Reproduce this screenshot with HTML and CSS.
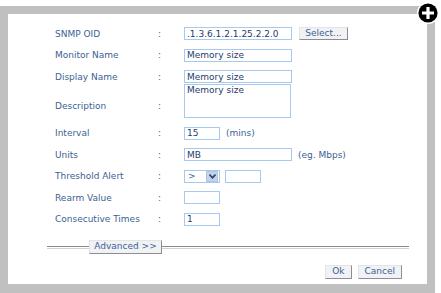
FILE: index.html
```html
<!DOCTYPE html>
<html lang="en">
<head>
  <meta charset="UTF-8" />
  <title>SNMP Monitor</title>
  <link rel="stylesheet" href="styles.css">
</head>
<body>
  <div class="frame">
    <div class="panel">
      <form class="monitor-form">
        <div class="row">
          <label class="label">SNMP OID</label>
          <span class="colon">:</span>
          <div class="field">
            <input class="text wide" type="text" value=".1.3.6.1.2.1.25.2.2.0" />
            <button type="button" class="btn select-btn">Select...</button>
          </div>
        </div>
        <div class="row">
          <label class="label">Monitor Name</label>
          <span class="colon">:</span>
          <div class="field"><input class="text wide" type="text" value="Memory size" /></div>
        </div>
        <div class="row">
          <label class="label">Display Name</label>
          <span class="colon">:</span>
          <div class="field"><input class="text wide" type="text" value="Memory size" /></div>
        </div>
        <div class="row tight">
          <label class="label desc">Description</label>
          <span class="colon desc">:</span>
          <div class="field"><textarea class="text area">Memory size</textarea></div>
        </div>
        <div class="row">
          <label class="label">Interval</label>
          <span class="colon">:</span>
          <div class="field">
            <input class="text short" type="text" value="15" />
            <span class="hint">(mins)</span>
          </div>
        </div>
        <div class="row">
          <label class="label">Units</label>
          <span class="colon">:</span>
          <div class="field">
            <input class="text wide" type="text" value="MB" />
            <span class="hint">(eg. Mbps)</span>
          </div>
        </div>
        <div class="row">
          <label class="label">Threshold Alert</label>
          <span class="colon">:</span>
          <div class="field">
            <div class="select">
              <span class="select-val">&gt;</span>
              <span class="select-arrow">
                <svg width="7" height="5" viewBox="0 0 7 5"><path d="M0.5 0.5 L3.5 3.8 L6.5 0.5" fill="none" stroke="#2b3f66" stroke-width="1.6"/></svg>
              </span>
            </div>
            <input class="text short gap" type="text" value="" />
          </div>
        </div>
        <div class="row">
          <label class="label">Rearm Value</label>
          <span class="colon">:</span>
          <div class="field"><input class="text short" type="text" value="" /></div>
        </div>
        <div class="row">
          <label class="label">Consecutive Times</label>
          <span class="colon">:</span>
          <div class="field"><input class="text short" type="text" value="1" /></div>
        </div>

        <div class="advanced">
          <button type="button" class="btn adv-btn">Advanced &gt;&gt;</button>
        </div>

        <div class="actions">
          <button type="button" class="btn">Ok</button>
          <button type="button" class="btn">Cancel</button>
        </div>
      </form>
    </div>
  </div>
  <svg class="add-icon" width="24" height="24" viewBox="0 0 24 24">
    <circle cx="12" cy="12" r="11" fill="#fff"/>
    <circle cx="12" cy="12" r="9.6" fill="#000"/>
    <path d="M12 6 V18 M6 12 H18" stroke="#fff" stroke-width="3.2"/>
  </svg>
</body>
</html>
```

FILE: styles.css
```css
body {
  margin: 0;
  background: #fff;
  font-family: 'DejaVu Sans', Verdana, sans-serif;
  font-size: 9px;
  color: #3d5f94;
}
.frame {
  position: relative;
  margin-top: 6px;
  width: 435px;
  height: 287px;
  box-sizing: border-box;
  padding: 8px 8px 9px 8px;
  background: #c0c0c0;
}
.panel {
  background: #fff;
  height: 270px;
}
.monitor-form {
  padding: 13px 0 0 47px;
}
.row {
  display: flex;
  align-items: center;
  height: 13px;
  margin-top: 8.5px;
}
.row:first-child {
  margin-top: 0;
}
.row.tight {
  margin-top: 1px;
  height: 34px;
}
.label {
  width: 103px;
  white-space: nowrap;
}
.colon {
  width: 26px;
}
.desc {
  padding-top: 9px;
}
.field {
  display: flex;
  align-items: center;
}
.text {
  box-sizing: border-box;
  height: 13px;
  border: 1px solid #a7c9ee;
  padding: 0 2px;
  font-family: inherit;
  font-size: 9px;
  color: #1f3c6b;
  background: #fff;
  outline: none;
}
.wide {
  width: 108px;
}
.short {
  width: 36px;
}
.area {
  width: 107px;
  height: 34px;
  resize: none;
  padding: 0 2px;
  line-height: 11px;
  overflow: hidden;
}
.gap {
  margin-left: 5px;
}
.hint {
  margin-left: 6px;
}
.select {
  display: flex;
  align-items: center;
  justify-content: space-between;
  box-sizing: border-box;
  width: 36px;
  height: 13px;
  border: 1px solid #a7c9ee;
  padding: 0 1px 0 3px;
  color: #3d5f94;
}
.select-arrow {
  display: flex;
  align-items: center;
  justify-content: center;
  width: 10px;
  height: 9px;
  background: #c4d2ec;
  border: 1px solid #b3c3e2;
}
.btn {
  box-sizing: border-box;
  height: 14px;
  padding: 0 6px;
  font-family: inherit;
  font-size: 9px;
  color: #3d5f94;
  background: #f0f2f5;
  border: 1px solid;
  border-color: #e4e4e4 #8e8e8e #8e8e8e #e4e4e4;
  line-height: 11px;
  white-space: nowrap;
}
.select-btn {
  width: 49px;
  height: 13px;
  margin-left: 7px;
  padding: 0;
}
.advanced {
  position: relative;
  margin: 14px 18px 0 -8px;
  height: 14px;
  display: flex;
  align-items: center;
}
.advanced::before {
  content: "";
  position: absolute;
  left: 0;
  right: 0;
  top: 6px;
  height: 1px;
  border-top: 1px solid #8a8a8a;
  border-bottom: 1px solid #d2d2d2;
}
.adv-btn {
  position: relative;
  margin-left: 42px;
  width: 73px;
  padding: 0;
}
.actions {
  display: flex;
  justify-content: flex-end;
  gap: 6px;
  margin: 11px 25px 0 0;
}
.add-icon {
  position: absolute;
  left: 416px;
  top: 1px;
}
```
